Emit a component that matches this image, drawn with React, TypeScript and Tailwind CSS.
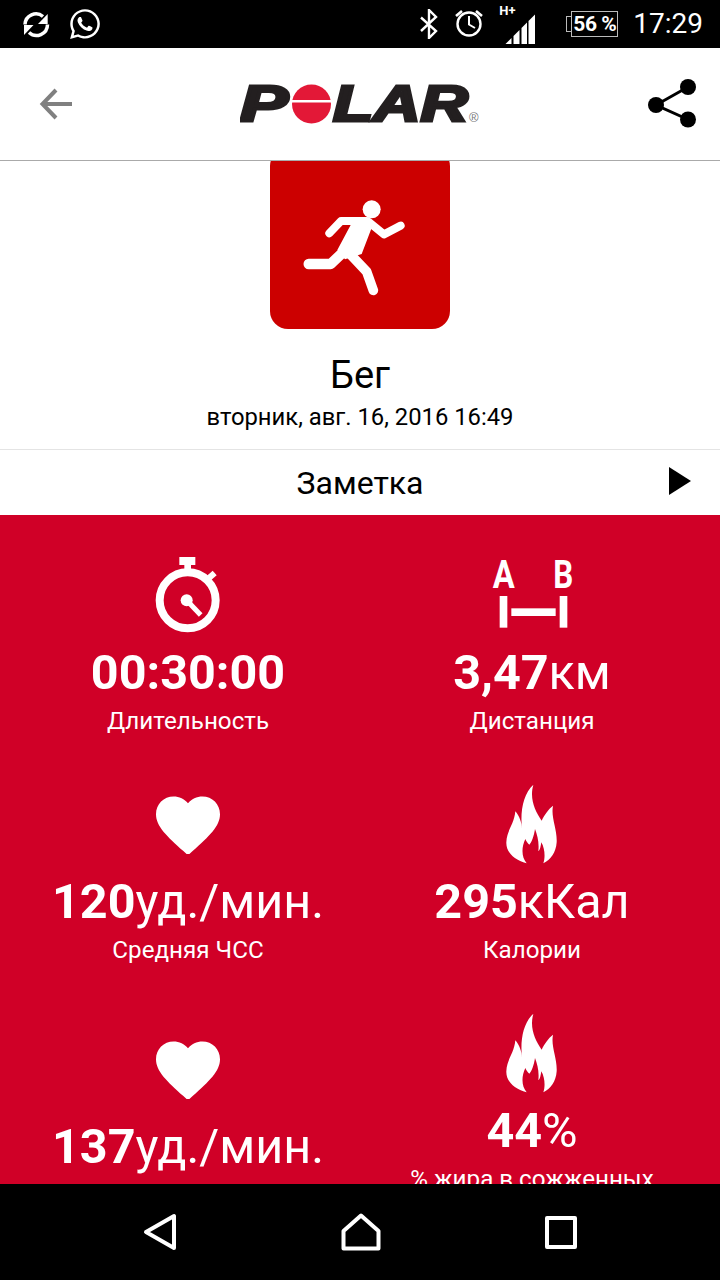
import { FaWhatsapp } from "react-icons/fa";

const font = { fontFamily: "Roboto, sans-serif" };

function SyncIcon() {
  return (
    <svg width="30" height="30" viewBox="21 9 30 30" fill="none">
      <path d="M25 24.5A11 11 0 0 1 43 16.5" stroke="white" strokeWidth="3.5" />
      <path d="M47.5 24.5A11 11 0 0 1 29 32.5" stroke="white" strokeWidth="3.5" />
      <path d="M47.7 14V24H38Z" fill="white" />
      <path d="M24 35V25H33.5Z" fill="white" />
    </svg>
  );
}

function BluetoothIcon() {
  return (
    <svg width="22" height="30" viewBox="418 9 22 30" fill="none">
      <path d="M421 17.5L436 31L429 38V10L436 17L421 31" stroke="white" strokeWidth="2.4" />
    </svg>
  );
}

function AlarmIcon() {
  return (
    <svg width="30" height="30" viewBox="454 10 30 30" fill="none" stroke="white">
      <circle cx="469" cy="25" r="11.5" strokeWidth="2.4" />
      <path d="M469 17V25.5L475 29" strokeWidth="2" />
      <path d="M456 17L462 12M482 17L476 12" strokeWidth="2.6" />
    </svg>
  );
}

function SignalIcon() {
  return (
    <div className="relative w-[31px] h-[40px]">
      <span className="absolute -left-[6px] top-0 text-[13px] leading-[13px] font-bold text-white">H+</span>
      <svg className="absolute left-0 top-0" width="31" height="40" viewBox="506 0 31 40" fill="white">
        <path d="M506.5 40L512.5 34V40Z" />
        <path d="M514.5 40V32L520.5 26V40Z" />
        <path d="M522.5 40V24L528 18.5V40Z" />
        <path d="M529.5 40V17L536 10.5V40Z" />
      </svg>
    </div>
  );
}

function Battery() {
  return (
    <div className="flex items-center">
      <div className="w-[5px] h-[16px] border border-r-0 border-[#bbbbbb]" />
      <div className="w-[47px] h-[26px] border border-[#bbbbbb] flex items-center justify-center">
        <span className="text-[21px] leading-none font-bold text-white tracking-[-0.5px]">56 %</span>
      </div>
    </div>
  );
}

function PolarLogo() {
  return (
    <svg width="240" height="60" viewBox="240 74 240 60">
      <text x="240" y="121" fontFamily="Liberation Sans" fontWeight="700" fontStyle="italic" fontSize="50" textLength="48" lengthAdjust="spacingAndGlyphs" fill="#231f20" stroke="#231f20" strokeWidth="3">P</text>
      <circle cx="311.5" cy="104" r="19.5" fill="#e31837" />
      <rect x="290" y="100" width="44" height="2.5" fill="white" />
      <text x="333" y="121" fontFamily="Liberation Sans" fontWeight="700" fontStyle="italic" fontSize="50" textLength="135" lengthAdjust="spacingAndGlyphs" fill="#231f20" stroke="#231f20" strokeWidth="3">LAR</text>
      <text x="469" y="122" fontFamily="Liberation Sans" fontSize="13" fill="#777777">®</text>
    </svg>
  );
}

function Runner() {
  return (
    <svg className="w-[180px] h-[169px]" viewBox="30 30 540 507" fill="none" stroke="white" strokeLinecap="round" strokeLinejoin="round">
      <circle cx="335" cy="178" r="27" fill="white" stroke="none" />
      <path d="M243 203H322L338 226L305 312L255 328L232 300L272 225H250Z" fill="white" stroke="none" />
      <path d="M208 250L243 213H320" strokeWidth="24" />
      <path d="M325 215L372 253L422 227" strokeWidth="24" />
      <path d="M146 342H212L250 306" strokeWidth="31" />
      <path d="M270 312L320 365L340 421" strokeWidth="29" />
    </svg>
  );
}

function Stopwatch() {
  return (
    <svg width="120" height="100" viewBox="-4 12 360 300" fill="white" stroke="none">
      <circle cx="175" cy="178" r="84" fill="none" stroke="white" strokeWidth="24" />
      <rect x="150" y="48" width="48" height="24" />
      <rect x="165" y="70" width="20" height="20" />
      <path d="M238 112L256 96" stroke="white" strokeWidth="18" />
      <circle cx="172" cy="178" r="18" />
      <path d="M172 178L214 222" stroke="white" strokeWidth="15" />
    </svg>
  );
}

function AbDistance() {
  return (
    <svg width="120" height="90" viewBox="4 15 360 270" fill="white">
      <text x="66" y="128" fontFamily="Roboto" fontWeight="700" fontSize="116" textLength="66" lengthAdjust="spacingAndGlyphs">A</text>
      <text x="248" y="128" fontFamily="Roboto" fontWeight="700" fontSize="116" textLength="60" lengthAdjust="spacingAndGlyphs">B</text>
      <rect x="87" y="153" width="23" height="95" />
      <rect x="122" y="190" width="133" height="23" />
      <rect x="267" y="153" width="23" height="95" />
    </svg>
  );
}

function Heart() {
  return (
    <svg width="64" height="60" viewBox="2 2.4 20 18.35" fill="white">
      <path d="M12 21.35l-1.45-1.32C5.4 15.36 2 12.28 2 8.5 2 5.42 4.42 3 7.5 3c1.74 0 3.41.81 4.5 2.09C13.09 3.81 14.76 3 16.5 3 19.58 3 22 5.42 22 8.5c0 3.78-3.4 6.86-8.55 11.54L12 21.35z" />
    </svg>
  );
}

function Flame() {
  return (
    <svg width="100" height="100" viewBox="6 0 300 300" fill="white">
      <path d="M140 268C100 258 78 232 79 205C80 170 103 150 106 112C118 125 125 145 126 165C120 110 130 60 160 32C148 75 165 110 185 140C192 125 205 105 219 95C212 130 232 165 230 205C228 235 212 258 190 268C196 250 195 225 184 205C182 218 180 228 175 232C178 205 172 185 165 165C162 185 155 205 148 212C143 208 138 200 136 195C124 220 124 250 140 268Z" />
    </svg>
  );
}

type Stat = {
  icon: React.ReactNode;
  value: string;
  unit?: string;
  label: string;
};

const stats: Stat[] = [
  { icon: <Stopwatch />, value: "00:30:00", label: "Длительность" },
  { icon: <AbDistance />, value: "3,47", unit: "км", label: "Дистанция" },
  { icon: <Heart />, value: "120", unit: "уд./мин.", label: "Средняя ЧСС" },
  { icon: <Flame />, value: "295", unit: "кКал", label: "Калории" },
  { icon: <Heart />, value: "137", unit: "уд./мин.", label: "Макс. ЧСС" },
  { icon: <Flame />, value: "44", unit: "%", label: "% жира в сожженных калориях" },
];

function StatCell({ stat }: { stat: Stat }) {
  return (
    <div className="flex flex-col items-center pt-5 pb-[27px] text-white">
      <div className="h-[80px] flex items-center justify-center">{stat.icon}</div>
      <div className="mt-[10px] text-[48.5px] leading-[56px] whitespace-nowrap">
        <span className="font-bold">{stat.value}</span>
        {stat.unit && <span>{stat.unit}</span>}
      </div>
      <div className="mt-[4px] w-[300px] text-center text-[24.2px] leading-[32px]">{stat.label}</div>
    </div>
  );
}

export default function App() {
  return (
    <div style={font} className="w-[720px] h-[1280px] flex flex-col bg-white overflow-hidden">
      <div className="h-[48px] shrink-0 bg-black flex items-center pl-[21px] pr-[17px]">
        <SyncIcon />
        <FaWhatsapp className="ml-[17px] text-white" size={34} />
        <div className="ml-auto flex items-center">
          <BluetoothIcon />
          <div className="ml-[14px]"><AlarmIcon /></div>
          <div className="ml-[21px]"><SignalIcon /></div>
          <div className="ml-[30px]"><Battery /></div>
          <span className="ml-[15px] text-[28px] leading-none text-white">17:29</span>
        </div>
      </div>

      <header className="h-[113px] shrink-0 flex items-center justify-between pl-[39px] pr-[24px] border-b border-[#aaaaaa]">
        <svg width="34" height="34" viewBox="39 87 34 34" fill="none" stroke="#808080" strokeWidth="4">
          <path d="M72 104H44M56 90L42.5 104L56 118" />
        </svg>
        <PolarLogo />
        <svg width="49" height="50" viewBox="646 79 49 50" fill="black">
          <circle cx="687" cy="87" r="8" />
          <circle cx="655" cy="105" r="8" />
          <circle cx="687" cy="119.5" r="8" />
          <path d="M687 87L655 105L687 119.5" fill="none" stroke="black" strokeWidth="3" />
        </svg>
      </header>

      <main className="flex-1 min-h-0 overflow-hidden flex flex-col">
        <div className="-mt-[13px] self-center w-[180px] h-[181px] shrink-0 rounded-[18px] bg-[#cc0000] flex items-end">
          <Runner />
        </div>
        <h1 className="mt-[23px] text-center text-[38px] leading-[46px] font-normal text-black">Бег</h1>
        <p className="mt-[4px] text-center text-[23.8px] leading-[30px] text-black">вторник, авг. 16, 2016 16:49</p>
        <div className="mt-[17px] h-[66px] shrink-0 border-t border-[#e4e4e4] relative flex items-center justify-center">
          <span className="text-[32px] leading-none text-black">Заметка</span>
          <svg className="absolute right-[29px] top-[17px]" width="22" height="28" viewBox="0 0 22 28" fill="black">
            <path d="M0 0L22 14L0 28Z" />
          </svg>
        </div>
        <section className="flex-1 bg-[#d00027] pt-5 px-4">
          <div className="grid grid-cols-2 items-center">
            {stats.map((stat) => (
              <StatCell key={stat.label} stat={stat} />
            ))}
          </div>
        </section>
      </main>

      <nav className="h-[96px] shrink-0 bg-black flex items-center justify-between px-[143px]">
        <svg width="34" height="38" viewBox="0 0 34 38" fill="none" stroke="white" strokeWidth="4" strokeLinejoin="round">
          <path d="M31 3V35L3 19Z" />
        </svg>
        <svg width="40" height="38" viewBox="0 0 40 38" fill="none" stroke="white" strokeWidth="4" strokeLinejoin="round">
          <path d="M2.5 18L20 2.5L37.5 18V35.5H2.5Z" />
        </svg>
        <svg width="32" height="33" viewBox="0 0 32 33" fill="none" stroke="white" strokeWidth="4" strokeLinejoin="round">
          <rect x="2" y="2" width="28" height="29" />
        </svg>
      </nav>
    </div>
  );
}
